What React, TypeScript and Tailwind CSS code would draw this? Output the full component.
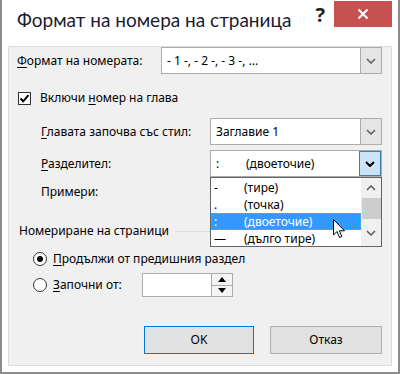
import React from "react";

const font = "font-['Noto_Sans',Arial,sans-serif]";

function U({ children }: { children: React.ReactNode }) {
  return <span className="underline underline-offset-2">{children}</span>;
}

function Chevron({ dark }: { dark?: boolean }) {
  return (
    <svg width="10" height="6" viewBox="0 0 10 6">
      <path
        d="M1 1 L5 5 L9 1"
        fill="none"
        stroke={dark ? "#000" : "#606060"}
        strokeWidth={dark ? 2 : 1.6}
      />
    </svg>
  );
}

function Select({
  value,
  className,
  active,
}: {
  value: React.ReactNode;
  className?: string;
  active?: boolean;
}) {
  return (
    <div className={`flex h-[27px] border border-[#acacac] bg-white ${className ?? ""}`}>
      <div className="flex flex-1 items-center pl-[5px] text-[12px] text-black">{value}</div>
      <div
        className={`flex w-[22px] items-center justify-center border ${
          active ? "border-[#3c7fb1] bg-[#cce4f7]" : "border-[#acacac] bg-[#e5e5e5] -my-px -mr-px"
        }`}
      >
        <Chevron dark={active} />
      </div>
    </div>
  );
}

function Radio({ checked }: { checked?: boolean }) {
  return (
    <div className="flex h-[14px] w-[14px] items-center justify-center rounded-full border border-[#333] bg-white">
      {checked && <div className="h-[6px] w-[6px] rounded-full bg-black" />}
    </div>
  );
}

const items = [
  { s: "-", t: "(тире)" },
  { s: ".", t: "(точка)" },
  { s: ":", t: "(двоеточие)", sel: true },
  { s: "—", t: "(дълго тире)" },
];

export default function App() {
  return (
    <div className={`relative flex h-[374px] w-[400px] flex-col border-x-2 border-b-2 border-[#8c8c8c] bg-white ${font}`}>
      {/* title bar */}
      <div className="flex h-[46px] shrink-0 items-start">
        <div className="whitespace-nowrap pl-[15px] pt-[6px] font-['Lato',sans-serif] text-[19px] leading-[28px] text-[#1b1b2f]">
          Формат на номера на страница
        </div>
        <div className="ml-auto pt-[4px] pr-[9px] text-[20px] font-bold leading-[22px] text-[#222]">?</div>
        <div className="mt-[1px] flex h-[26px] w-[58px] items-center justify-center bg-[#c75050]">
          <svg width="12" height="12" viewBox="0 0 12 12">
            <path d="M1.5 1.5 L10.5 10.5 M10.5 1.5 L1.5 10.5" stroke="#fff" strokeWidth="2" />
          </svg>
        </div>
        <div className="w-[6px]" />
      </div>

      {/* body */}
      <div className="mx-[6px] mb-[6px] flex flex-1 flex-col border border-[#dcdcdc] bg-[#f0f0f0] pl-[8px] pr-[9px] text-[12px] text-black">
        <div className="flex h-[27px] items-center">
          <span className="w-[144px]">
            <U>Ф</U>ормат на номерата:
          </span>
          <Select className="flex-1" value="- 1 -, - 2 -, - 3 -, ..." />
        </div>

        <div className="mt-[14px] flex h-[20px] items-center pl-[1px]">
          <div className="flex h-[13px] w-[13px] items-center justify-center border border-[#333] bg-white">
            <svg width="11" height="11" viewBox="0 0 11 11">
              <path d="M1.5 5.5 L4.2 8.3 L9.5 2.2" fill="none" stroke="#000" strokeWidth="2" />
            </svg>
          </div>
          <span className="ml-[9px]">
            Включи <U>н</U>омер на глава
          </span>
        </div>

        <div className="mt-[10px] flex h-[27px] items-center pl-[24px]">
          <span className="w-[169px]">
            <U>Г</U>лавата започва със стил:
          </span>
          <Select className="flex-1" value="Заглавие 1" />
        </div>

        <div className="mt-[5px] flex h-[27px] items-center pl-[24px]">
          <span className="w-[169px]">
            <U>Р</U>азделител:
          </span>
          <Select
            className="flex-1"
            active
            value={
              <>
                <span className="w-[30px]">:</span>(двоеточие)
              </>
            }
          />
        </div>

        <div className="mt-[5px] flex h-[20px] items-center pl-[24px]">Примери:</div>

        <div className="mt-[19px] flex h-[20px] items-center pl-[2px]">
          <span>Номериране на страници</span>
          <div className="ml-[6px] h-px flex-1 bg-[#dcdcdc]" />
        </div>

        <div className="mt-[8px] flex h-[20px] items-center pl-[16px]">
          <Radio checked />
          <span className="ml-[6px]">
            <U>П</U>родължи от предишния раздел
          </span>
        </div>

        <div className="mt-[4px] flex h-[24px] items-center pl-[16px]">
          <Radio />
          <span className="ml-[6px] w-[89px]">
            <U>З</U>апочни от:
          </span>
          <div className="flex h-[24px] w-[91px] border border-[#acacac] bg-white">
            <div className="flex-1" />
            <div className="flex w-[21px] flex-col border-l border-[#acacac]">
              <div className="flex flex-1 items-center justify-center border-b border-[#acacac] bg-[#f4f4f4]">
                <svg width="8" height="5" viewBox="0 0 8 5">
                  <path d="M0 5 L4 0 L8 5 Z" fill="#000" />
                </svg>
              </div>
              <div className="flex flex-1 items-center justify-center bg-[#f4f4f4]">
                <svg width="8" height="5" viewBox="0 0 8 5">
                  <path d="M0 0 L4 5 L8 0 Z" fill="#000" />
                </svg>
              </div>
            </div>
          </div>
        </div>

        <div className="mt-[29px] flex h-[28px] justify-end gap-[16px]">
          <button className="w-[110px] border border-[#0078d7] bg-[#e1e1e1] text-[12px]">OK</button>
          <button className="w-[112px] border border-[#adadad] bg-[#e1e1e1] text-[12px]">Отказ</button>
        </div>
      </div>

      {/* open dropdown list */}
      <div className="absolute left-[208px] top-[177px] flex h-[70px] w-[172px] border border-[#646464] bg-white text-[12px]">
        <div className="flex flex-1 flex-col pt-[1px]">
          {items.map((it) => (
            <div
              key={it.t}
              className={`flex h-[17px] items-center pl-[2px] ${
                it.sel ? "border border-dotted border-[#e08a2c] bg-[#3399ff] text-white" : "border border-transparent"
              }`}
            >
              <span className="w-[30px]">{it.s}</span>
              {it.t}
            </div>
          ))}
        </div>
        <div className="flex w-[20px] flex-col items-center bg-[#f0f0f0]">
          <div className="flex h-[20px] items-center">
            <svg width="10" height="6" viewBox="0 0 10 6">
              <path d="M1 5 L5 1 L9 5" fill="none" stroke="#606060" strokeWidth="1.6" />
            </svg>
          </div>
          <div className="h-[21px] w-[19px] bg-[#cdcdcd]" />
          <div className="flex flex-1 items-center">
            <Chevron />
          </div>
        </div>
      </div>

      {/* mouse pointer */}
      <svg className="absolute left-[331px] top-[219px]" width="13" height="20" viewBox="0 0 13 20">
        <path
          d="M0.5 0.5 L0.5 16 L4 12.5 L6.5 18.5 L8.8 17.5 L6.4 11.8 L11.5 11.8 Z"
          fill="#fff"
          stroke="#000"
          strokeWidth="1"
          strokeLinejoin="round"
        />
      </svg>
    </div>
  );
}
